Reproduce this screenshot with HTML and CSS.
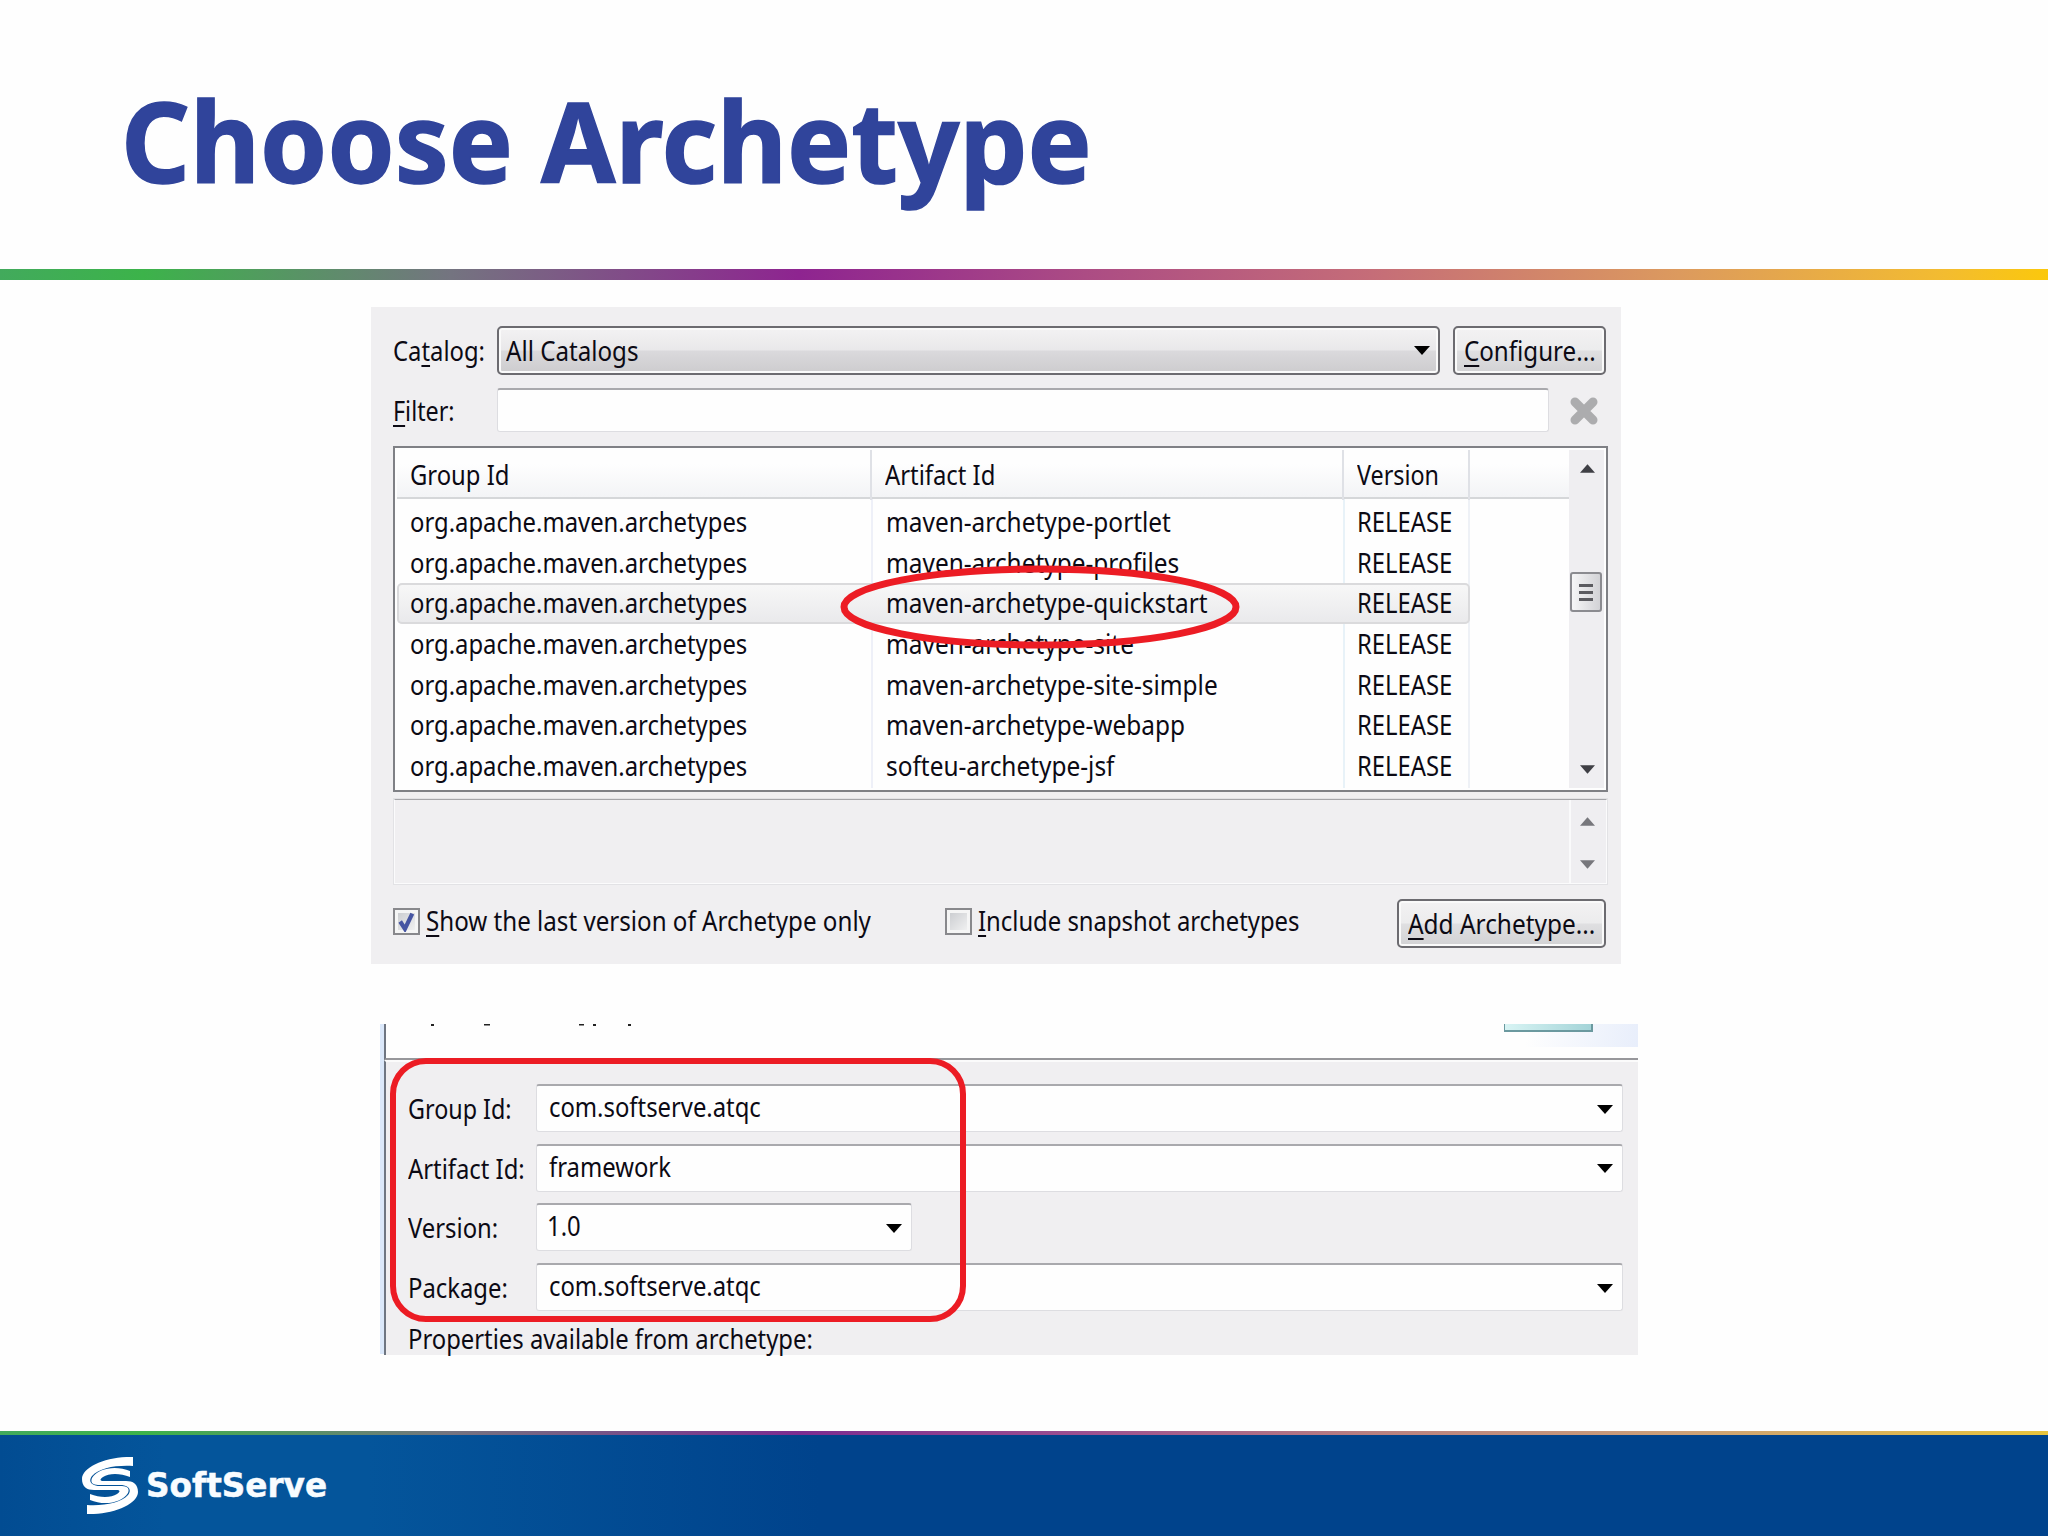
FILE: index.html
```html
<!DOCTYPE html>
<html lang="en">
<head>
<meta charset="utf-8">
<title>Choose Archetype</title>
<link rel="stylesheet" href="styles.css">
</head>
<body>
<main class="slide">
  <header class="head"><h1 class="title">Choose Archetype</h1></header>
  <div class="rule"></div>

  <section class="dialog">
    <div class="row catalog">
      <label class="lbl"><span class="t">Ca<u>t</u>alog:</span></label>
      <div class="combo"><span class="t wide">All Catalogs</span><svg class="drop" viewBox="0 0 16 9"><path d="M0 0h16L8 9z"/></svg></div>
      <button class="btn configure"><span class="t wide"><u>C</u>onfigure...</span></button>
    </div>
    <div class="row filter">
      <label class="lbl"><span class="t tight"><u>F</u>ilter:</span></label>
      <div class="input"></div>
      <svg class="clear" viewBox="0 0 30 30"><path d="M6 6L24 24M24 6L6 24"/></svg>
    </div>

    <div class="table">
      <div class="grid">
        <div class="tr th"><div><span class="t">Group Id</span></div><div><span class="t">Artifact Id</span></div><div><span class="t tight">Version</span></div><div></div></div>
        <div class="body">
          <div class="tr"><div><span class="t">org.apache.maven.archetypes</span></div><div><span class="t artifact">maven-archetype-portlet</span></div><div><span class="t">RELEASE</span></div></div>
          <div class="tr"><div><span class="t">org.apache.maven.archetypes</span></div><div><span class="t artifact">maven-archetype-profiles</span></div><div><span class="t">RELEASE</span></div></div>
          <div class="tr sel"><div><span class="t">org.apache.maven.archetypes</span></div><div><span class="t artifact">maven-archetype-quickstart</span></div><div><span class="t">RELEASE</span></div></div>
          <div class="tr"><div><span class="t">org.apache.maven.archetypes</span></div><div><span class="t artifact">maven-archetype-site</span></div><div><span class="t">RELEASE</span></div></div>
          <div class="tr"><div><span class="t">org.apache.maven.archetypes</span></div><div><span class="t artifact">maven-archetype-site-simple</span></div><div><span class="t">RELEASE</span></div></div>
          <div class="tr"><div><span class="t">org.apache.maven.archetypes</span></div><div><span class="t artifact">maven-archetype-webapp</span></div><div><span class="t">RELEASE</span></div></div>
          <div class="tr"><div><span class="t">org.apache.maven.archetypes</span></div><div><span class="t artifact">softeu-archetype-jsf</span></div><div><span class="t">RELEASE</span></div></div>
        </div>
      </div>
      <div class="scroll">
        <svg class="arrow" viewBox="0 0 16 9"><path d="M0 9h16L8 0z"/></svg>
        <div class="thumb"><i></i><i></i><i></i></div>
        <svg class="arrow" viewBox="0 0 16 9"><path d="M0 0h16L8 9z"/></svg>
      </div>
      <svg class="mark oval" viewBox="0 0 400 84"><ellipse cx="200" cy="42" rx="196" ry="38"/></svg>
    </div>

    <div class="desc">
      <div class="scroll">
        <svg class="arrow" viewBox="0 0 16 9"><path d="M0 9h16L8 0z"/></svg>
        <svg class="arrow" viewBox="0 0 16 9"><path d="M0 0h16L8 9z"/></svg>
      </div>
    </div>

    <div class="row options">
      <label class="check first"><span class="box"><svg viewBox="0 0 20 20"><path d="M4 10l4.500 7L15.500 2.500"/></svg></span><span class="t wide"><u>S</u>how the last version of Archetype only</span></label>
      <label class="check"><span class="box"></span><span class="t"><u>I</u>nclude snapshot archetypes</span></label>
      <button class="btn add"><span class="t artifact"><u>A</u>dd Archetype...</span></button>
    </div>
  </section>

  <section class="form">
    <div class="banner">
      <svg class="tails" viewBox="0 0 220 3"><path d="M4 0h3v2h-3zM57 0h6v1.500h-6zM152 0h5v1.500h-5zM166 0h3v2h-3zM201 0h3v2h-3z"/></svg>
      <div class="art"><div class="chip"></div></div>
    </div>
    <div class="fields">
      <div class="field"><label><span class="t tight">Group Id:</span></label><div class="input"><span class="t">com.softserve.atqc</span><svg class="drop" viewBox="0 0 16 9"><path d="M0 0h16L8 9z"/></svg></div></div>
      <div class="field"><label><span class="t">Artifact Id:</span></label><div class="input"><span class="t">framework</span><svg class="drop" viewBox="0 0 16 9"><path d="M0 0h16L8 9z"/></svg></div></div>
      <div class="field short"><label><span class="t">Version:</span></label><div class="input"><span class="t">1.0</span><svg class="drop" viewBox="0 0 16 9"><path d="M0 0h16L8 9z"/></svg></div></div>
      <div class="field"><label><span class="t">Package:</span></label><div class="input"><span class="t">com.softserve.atqc</span><svg class="drop" viewBox="0 0 16 9"><path d="M0 0h16L8 9z"/></svg></div></div>
      <p class="note"><span class="t">Properties available from archetype:</span></p>
    </div>
    <div class="mark frame"></div>
  </section>

  <footer class="foot">
    <svg class="logo" viewBox="0 0 56 57"><defs><path id="band" d="M51 0C25-1 0 10 0 22C0 30 5 33 12 33H34C39 33 38 35 35 37C29 41 18 41 8 37V43C22 49 40 46 46 36C48 31 45 29 38 29H18C9 29 6 24 10 19C17 11 34 8 51 9Z"/></defs><use href="#band"/><use href="#band" transform="rotate(180 28 28.5)"/></svg>
    <span class="brand">SoftServe</span>
  </footer>
</main>
</body>
</html>
```
FILE: styles.css
```css
* { box-sizing: border-box; }
body { margin: 0; background: #fefefe; }
.slide {
  width: 2048px; height: 1536px; overflow: hidden;
  display: flex; flex-direction: column;
  font: 26.5px/40px "Noto Sans", "Open Sans", sans-serif; color: #0c0a14;
}
.head { height: 269px; padding: 60px 0 0 121px; flex: none; }
.title { margin: 0; font-size: 111px; line-height: 160px; font-weight: 700; color: #30449b; -webkit-text-stroke: 1.5px #30449b; white-space: nowrap; transform: scaleX(.97); transform-origin: 0 0; width: max-content; }
.rule { flex: none; height: 11px; background: linear-gradient(90deg, #42aa5c 0, #3cb34a 7%, #747480 22%, #8e2490 39%, #ac4c84 53%, #c56d78 67%, #dc9a5e 82%, #f3bc30 95%, #fbc80c 100%); }

/* UI label text, condensed slightly */
.t { display: inline-block; white-space: nowrap; transform: scaleX(.899); transform-origin: 0 50%; }
.t.tight { transform: scaleX(.88); }
.t.wide { transform: scaleX(.911); }
.t.artifact { transform: scaleX(.921); }
u { text-decoration-thickness: 2px; text-underline-offset: 4px; text-decoration-skip-ink: none; }

.dialog { flex: none; width: 1250px; height: 657px; margin: 27px 0 0 371px; padding: 19px 13px 0 22px; background: #f0eff1; }
.row { display: flex; }
.lbl { width: 104px; }
.catalog { height: 49px; line-height: 49px; }
.catalog .lbl { padding-top: 1px; }
.combo, .btn { border: 2px solid #6c6b70; border-radius: 5px; box-shadow: inset 0 0 0 2px #fafafa; background: linear-gradient(#f3f2f3 0, #e9e8ea 48%, #dad9dc 52%, #cdccce 100%); }
.combo { width: 943px; display: flex; justify-content: space-between; align-items: center; padding: 0 8px 0 7px; line-height: 44px; }
.drop { width: 16px; height: 9px; }
.btn { font: inherit; color: inherit; padding: 0 0 0 9px; text-align: left; line-height: 44px; background: linear-gradient(#f3f2f3 0, #ececed 48%, #dfdfe1 52%, #d2d2d4 100%); }
.configure { width: 153px; margin-left: 13px; }
.filter { height: 44px; line-height: 46px; margin-top: 13px; }
.input { background: #fefefe; border: 1px solid #dddde1; border-top: 2px solid #a9a9ad; border-radius: 3px; }
.filter .input { width: 1052px; }
.clear { width: 30px; height: 30px; margin: 8px 0 0 20px; fill: none; stroke: #acacae; stroke-width: 9; stroke-linecap: round; }

.table { position: relative; display: flex; width: 1215px; height: 346px; margin-top: 14px; border: 2px solid #7f8085; background: #fefefe; padding: 2px; }
.grid { width: 1172px; }
.tr { display: grid; grid-template-columns: 474px 472px 126px 1fr; }
.tr > div { padding-left: 15px; }
.tr > div:first-child { padding-left: 13px; }
.tr > div:nth-child(3) { padding-left: 14px; }
.th { height: 49px; line-height: 50px; background: linear-gradient(#fefefe 30%, #f3f4f6); border-bottom: 2px solid #d5d7d9; }
.th > div + div { border-left: 2px solid #dfe1e6; margin-left: -1px; }
.tr.th > div:nth-child(2), .tr.th > div:nth-child(3) { padding-left: 13px; }
.body { height: 289px; padding-top: 3px; background: linear-gradient(90deg, transparent 474px, #eef0f8 474px 476px, transparent 476px 946px, #e8f2f8 946px 948px, transparent 948px 1071px, #eef1f6 1071px 1073px, transparent 1073px); }
.body .tr { height: 40.650px; line-height: 40px; }
.body .sel { width: 1073px; border-radius: 5px; background: linear-gradient(#f8f8f8, #e9e9eb); box-shadow: inset 0 0 0 2px #dadadc; }
.scroll { width: 35px; background: #efeef1; display: flex; flex-direction: column; align-items: center; }
.arrow { width: 15px; height: 9px; fill: #3f3f45; }
.table .scroll { padding: 14px 0 14px 1px; }
.thumb { width: 32px; height: 40px; margin: 99px 2px auto 0; border: 2px solid #8b8b90; border-radius: 3px; background: linear-gradient(90deg, #f6f6f7, #d2d2d6); display: flex; flex-direction: column; gap: 4px; align-items: center; justify-content: center; }
.thumb i { width: 14px; height: 3px; background: #5b5b60; }
.mark { position: absolute; }
.oval { left: 445px; top: 117px; width: 400px; height: 84px; fill: none; stroke: #ec1c24; stroke-width: 7; }

.desc { width: 1215px; height: 87px; margin-top: 6px; border: 2px solid #fbfbfc; border-top-color: #a5a5a9; outline: 1px solid #e2e2e5; outline-offset: -1px; display: flex; justify-content: flex-end; }
.desc .scroll { width: 37px; border-left: 2px solid #fafafb; padding: 17px 2px 14px 0; justify-content: space-between; }
.desc .arrow { fill: #77777c; }

.options { height: 49px; margin-top: 14px; line-height: 45px; }
.check { display: flex; align-items: flex-start; }
.first { width: 552px; }
.box { width: 27px; height: 27px; margin: 9px 6px 0 0; border: 2px solid #88888c; background: linear-gradient(135deg, #c6c8cc, #f6f6f6); box-shadow: inset 0 0 0 3px #f5f5f5; }
.box svg { display: block; width: 21px; height: 21px; margin: 1px; fill: none; stroke: #4655a2; stroke-width: 4; }
.add { width: 209px; margin-left: auto; margin-right: 2px; line-height: 46px; padding-left: 9px; }

.form { position: relative; flex: none; width: 1258px; height: 330px; margin: 60px 0 0 380px; border-left: 4px solid #dbe8fa; display: flex; flex-direction: column; }
.banner { height: 36px; border-left: 2px solid #6f7682; border-bottom: 2px solid #97979b; display: flex; justify-content: space-between; flex: none; }
.tails { width: 220px; height: 3px; margin-left: 41px; fill: #222; }
.art { width: 138px; height: 23px; background: linear-gradient(100deg, #fefefe 20%, #e8eefb); }
.chip { width: 89px; height: 8px; margin-left: 4px; background: linear-gradient(90deg, #d8f4f4, #a4d4d8); border: solid #6b999f; border-width: 0 2px 2px 1px; }
.fields { flex: 1; background: #f0eff1; border-left: 2px solid #6f7682; border-top: 2px solid #fbfbfb; padding: 22px 15px 0 22px; display: flex; flex-direction: column; }
.field { display: flex; height: 48px; margin-bottom: 11.700px; line-height: 50px; flex: none; }
.field label { width: 128px; }
.field .input { flex: 1; display: flex; justify-content: space-between; align-items: center; padding: 0 9px 0 12px; line-height: 40px; }
.field .input .t { margin-top: -3px; }
.field .drop { margin-top: 1px; }
.short .input { flex: none; width: 376px; padding-left: 10px; }
.note { margin: 0; line-height: 32px; }
.frame { left: 6px; top: 34px; width: 576px; height: 264px; border: 6px solid #ec1c24; border-radius: 36px; }

.foot { margin-top: auto; flex: none; height: 105px; background: linear-gradient(90deg, #42aa5c 0, #3cb34a 7%, #747480 22%, #7c2c90 39%, #9c5090 53%, #b88080 67%, #cca078 82%, #e8c43c 100%) 0 0 / 100% 4px no-repeat, linear-gradient(90deg, #024c92 0, #04559b 8%, #04559b 18%, #00438c 40%); padding: 26px 0 0 82px; display: flex; }
.logo { width: 56px; height: 57px; fill: #fff; }
.brand { font: 700 33px/40px "DejaVu Sans", sans-serif; color: #f8fcff; margin: 9px 0 0 8px; transform: scaleX(.99); transform-origin: 0 0; -webkit-text-stroke: .5px #f8fcff; }
```
